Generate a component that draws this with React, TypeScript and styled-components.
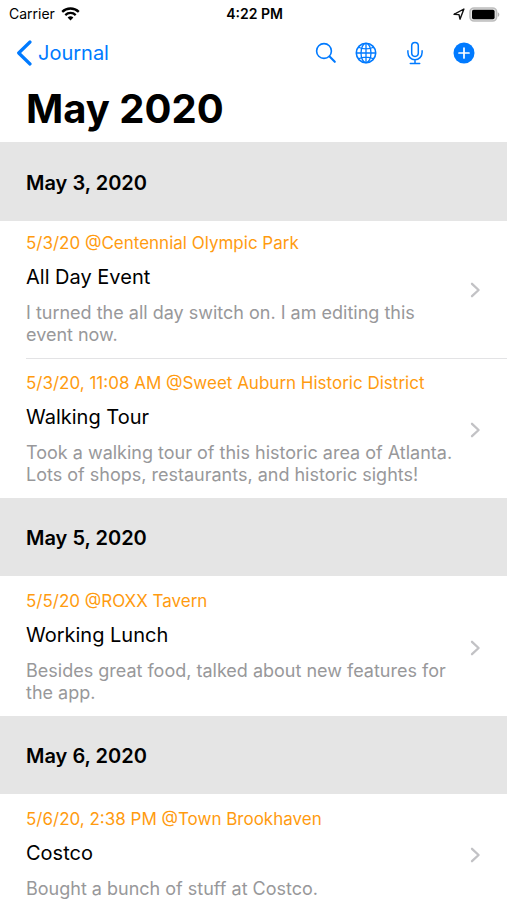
import React from "react";
import styled, { createGlobalStyle } from "styled-components";

const BLUE = "#007aff";

const GlobalStyle = createGlobalStyle`
  *, *::before, *::after { box-sizing: border-box; }
  html, body { height: 100%; }
  body {
    margin: 0;
    background: #fff;
    color: #000;
    font-family: Inter, "Liberation Sans", sans-serif;
    overflow-x: hidden;
    scrollbar-width: none;
  }
  #root { height: 100%; }
`;

const Screen = styled.div`
  height: 100%;
  display: flex;
  flex-direction: column;
`;

const StatusBar = styled.div`
  display: grid;
  grid-template-columns: 1fr auto 1fr;
  align-items: center;
  height: 28px;
  padding: 0 7px 0 9px;
  font-size: 14px;
  line-height: 20px;
`;

const StatusGroup = styled.div<{ $end?: boolean }>`
  display: flex;
  align-items: center;
  gap: ${(p) => (p.$end ? "4px" : "6px")};
  justify-content: ${(p) => (p.$end ? "flex-end" : "flex-start")};
`;

const Clock = styled.time`
  font-weight: 600;
`;

const NavBar = styled.nav`
  display: flex;
  align-items: center;
  justify-content: space-between;
  height: 50px;
  padding: 0 32px 0 16px;
`;

const BackLink = styled.a`
  display: flex;
  align-items: center;
  gap: 6px;
  color: ${BLUE};
  font-size: 20px;
  line-height: 26px;
  text-decoration: none;
`;

const Actions = styled.div`
  display: flex;
  align-items: center;
  gap: 28px;
`;

const IconButton = styled.button<{ $tight?: boolean }>`
  display: flex;
  padding: 0;
  margin-right: ${(p) => (p.$tight ? "-10px" : "0")};
  border: 0;
  background: none;
  color: ${BLUE};
  cursor: pointer;
`;

const PageTitle = styled.h1`
  margin: 0;
  padding: 6px 26px 8px;
  font-size: 40px;
  line-height: 50px;
  font-weight: 700;
`;

const Journal = styled.main`
  flex: 1;
  min-height: 0;
  overflow: hidden;
`;

const DayHeader = styled.h2<{ $first?: boolean }>`
  margin: 0;
  padding: ${(p) => (p.$first ? "28px" : "27px")} 26px 25px;
  background: #e5e5e5;
  font-size: 20px;
  line-height: 26px;
  font-weight: 600;
`;

const EntryList = styled.ul`
  margin: 0;
  padding: 0;
  list-style: none;
`;

const EntryItem = styled.li`
  padding-left: 26px;

  & + & > a {
    padding-top: 14px;
  }
`;

const EntryLink = styled.a<{ $first?: boolean; $divided?: boolean }>`
  display: flex;
  align-items: center;
  justify-content: space-between;
  gap: 16px;
  padding: ${(p) => (p.$first ? "12px" : "15px")} 26px 12px 0;
  border-bottom: ${(p) => (p.$divided ? "1px solid #e3e3e5" : "0")};
  color: inherit;
  text-decoration: none;
`;

const EntryText = styled.div`
  flex: 1;
  min-width: 0;
`;

const Meta = styled.p`
  margin: 0 0 11px;
  color: #ff9b0f;
  font-size: 17px;
  line-height: 20px;
`;

const EntryTitle = styled.h3`
  margin: 0 0 12px;
  font-size: 20px;
  line-height: 26px;
  font-weight: 400;
`;

const Summary = styled.p`
  margin: 0;
  color: #98989a;
  font-size: 18px;
  line-height: 22px;
`;

const WifiIcon = () => (
  <svg width="19" height="14" viewBox="0 0 19 14" fill="none" stroke="#000" aria-hidden="true">
    <path d="M1.2 4.9a11.8 11.8 0 0 1 16.6 0" strokeWidth="2.3" />
    <path d="M4.3 8.1a7.4 7.4 0 0 1 10.4 0" strokeWidth="2.2" />
    <path d="M9.5 13.6 6.6 10.6a4.1 4.1 0 0 1 5.8 0z" fill="#000" stroke="none" />
  </svg>
);

const LocationIcon = () => (
  <svg width="12" height="12" viewBox="0 0 12 12" fill="none" aria-hidden="true">
    <path d="M1 6.3 10.9 1 7 11.2 6 6.6z" stroke="#111" strokeWidth="1.4" strokeLinejoin="round" />
  </svg>
);

const BatteryIcon = () => (
  <svg width="31" height="15" viewBox="0 0 31 15" aria-hidden="true">
    <rect x="1" y="1" width="26.6" height="13" rx="4" fill="#e4e4e4" stroke="#bdbdbd" strokeWidth="1.6" />
    <rect x="3" y="2.8" width="22.6" height="9.4" rx="1.6" fill="#000" />
    <path d="M28.8 5.2c2 .8 2 3.8 0 4.6z" fill="#b4b4b4" />
  </svg>
);

const BackIcon = () => (
  <svg width="16" height="26" viewBox="0 0 16 26" fill="none" aria-hidden="true">
    <path d="M14 2 2.7 13 14 24" stroke="currentColor" strokeWidth="3.2" strokeLinecap="round" strokeLinejoin="round" />
  </svg>
);

const SearchIcon = () => (
  <svg width="22" height="22" viewBox="0 0 22 22" fill="none" stroke="currentColor" strokeLinecap="round" aria-hidden="true">
    <circle cx="9" cy="9" r="7.4" strokeWidth="1.6" />
    <path d="M14.6 14.6 19.8 19.8" strokeWidth="2.1" />
  </svg>
);

const GlobeIcon = () => (
  <svg width="22" height="22" viewBox="0 0 22 22" fill="none" stroke="currentColor" strokeWidth="1.3" aria-hidden="true">
    <circle cx="11" cy="11" r="9.7" strokeWidth="1.6" />
    <ellipse cx="11" cy="11" rx="5" ry="9.7" />
    <path d="M11 1.3v19.4M1.3 11h19.4M3.6 5.2c4 2.3 10.8 2.3 14.8 0M3.6 16.8c4-2.3 10.8-2.3 14.8 0" />
  </svg>
);

const MicIcon = () => (
  <svg width="20" height="24" viewBox="0 0 20 24" fill="none" stroke="currentColor" strokeWidth="1.5" strokeLinecap="round" aria-hidden="true">
    <rect x="6.7" y="1.4" width="6.6" height="14" rx="3.3" />
    <path d="M2.9 9.8v1.8a7.1 7.1 0 0 0 14.2 0V9.8M10 18.7v3.7M5.3 22.5h9.4" />
  </svg>
);

const AddIcon = () => (
  <svg width="22" height="22" viewBox="0 0 22 22" aria-hidden="true">
    <circle cx="11" cy="11" r="10.5" fill="currentColor" />
    <path d="M11 6v10M6 11h10" stroke="#fff" strokeWidth="1.7" strokeLinecap="round" />
  </svg>
);

const DisclosureIcon = () => (
  <svg width="11" height="16" viewBox="0 0 11 16" fill="none" aria-hidden="true">
    <path d="M2 1.8 8.6 8 2 14.2" stroke="#c2c2c5" strokeWidth="2.3" strokeLinecap="round" strokeLinejoin="round" />
  </svg>
);

interface Entry {
  meta: string;
  title: string;
  summary: string;
}

interface Day {
  date: string;
  entries: Entry[];
}

const days: Day[] = [
  {
    date: "May 3, 2020",
    entries: [
      {
        meta: "5/3/20 @Centennial Olympic Park",
        title: "All Day Event",
        summary: "I turned the all day switch on. I am editing this event now.",
      },
      {
        meta: "5/3/20, 11:08 AM @Sweet Auburn Historic District",
        title: "Walking Tour",
        summary:
          "Took a walking tour of this historic area of Atlanta. Lots of shops, restaurants, and historic sights!",
      },
    ],
  },
  {
    date: "May 5, 2020",
    entries: [
      {
        meta: "5/5/20 @ROXX Tavern",
        title: "Working Lunch",
        summary: "Besides great food, talked about new features for the app.",
      },
    ],
  },
  {
    date: "May 6, 2020",
    entries: [
      {
        meta: "5/6/20, 2:38 PM @Town Brookhaven",
        title: "Costco",
        summary: "Bought a bunch of stuff at Costco.",
      },
    ],
  },
];

export default function App() {
  return (
    <Screen>
      <GlobalStyle />
      <StatusBar>
        <StatusGroup>
          <span>Carrier</span>
          <WifiIcon />
        </StatusGroup>
        <Clock>4:22 PM</Clock>
        <StatusGroup $end>
          <LocationIcon />
          <BatteryIcon />
        </StatusGroup>
      </StatusBar>
      <NavBar>
        <BackLink href="#journal">
          <BackIcon />
          Journal
        </BackLink>
        <Actions>
          <IconButton type="button" aria-label="Search" $tight>
            <SearchIcon />
          </IconButton>
          <IconButton type="button" aria-label="Web">
            <GlobeIcon />
          </IconButton>
          <IconButton type="button" aria-label="Dictate">
            <MicIcon />
          </IconButton>
          <IconButton type="button" aria-label="Add entry">
            <AddIcon />
          </IconButton>
        </Actions>
      </NavBar>
      <PageTitle>May 2020</PageTitle>
      <Journal>
        {days.map((day, dayIndex) => (
          <section key={day.date}>
            <DayHeader $first={dayIndex === 0}>{day.date}</DayHeader>
            <EntryList>
              {day.entries.map((entry, i) => (
                <EntryItem key={entry.title}>
                  <EntryLink
                    href="#entry"
                    $first={dayIndex === 0 && i === 0}
                    $divided={i < day.entries.length - 1}
                  >
                    <EntryText>
                      <Meta>{entry.meta}</Meta>
                      <EntryTitle>{entry.title}</EntryTitle>
                      <Summary>{entry.summary}</Summary>
                    </EntryText>
                    <DisclosureIcon />
                  </EntryLink>
                </EntryItem>
              ))}
            </EntryList>
          </section>
        ))}
      </Journal>
    </Screen>
  );
}
